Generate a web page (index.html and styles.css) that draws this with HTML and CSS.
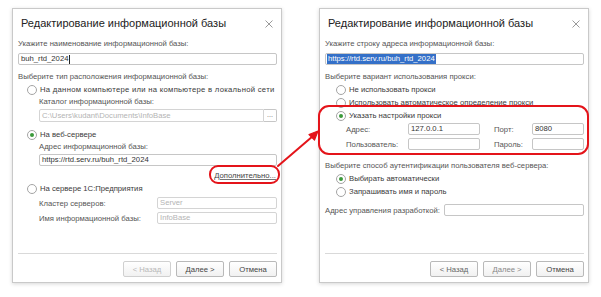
FILE: index.html
```html
<!DOCTYPE html>
<html lang="ru">
<head>
<meta charset="utf-8">
<link rel="stylesheet" href="styles.css">
</head>
<body>
<div class="page">
  <div class="dialog">
    <div class="title"><span>Редактирование информационной базы</span><svg class="close" width="8" height="8" viewBox="0 0 8 8"><path d="M0.5 0.5L7.5 7.5M7.5 0.5L0.5 7.5" stroke="#9a9a9a" stroke-width="1"/></svg></div>
    <div class="body">
      <div class="label">Укажите наименование информационной базы:</div>
      <div class="input mt3">buh_rtd_2024<span class="caret"></span></div>
      <div class="label mt5">Выберите тип расположения информационной базы:</div>
      <div class="radio r-left wide"><span class="circle"></span>На данном компьютере или на компьютере в локальной сети</div>
      <div class="label sub h12">Каталог информационной базы:</div>
      <div class="sub mt1 file-row"><div class="input disabled h13">C:\Users\kudant\Documents\InfoBase</div><div class="dots">...</div></div>
      <div class="radio r-left mt6"><span class="circle checked"></span>На веб-сервере</div>
      <div class="label sub h12">Адрес информационной базы:</div>
      <div class="input sub mt1">https://rtd.serv.ru/buh_rtd_2024</div>
      <div class="link-row mt4"><span class="link">Дополнительно...</span></div>
      <div class="radio r-left"><span class="circle"></span>На сервере 1С:Предприятия</div>
      <div class="field-row sub mt2"><span class="flabel w118">Кластер серверов:</span><div class="input disabled grow">Server</div></div>
      <div class="field-row sub mt3"><span class="flabel w118">Имя информационной базы:</span><div class="input disabled grow">InfoBase</div></div>
    </div>
    <div class="footer">
      <button class="btn off">&lt; Назад</button>
      <button class="btn">Далее &gt;</button>
      <button class="btn">Отмена</button>
    </div>
  </div>

  <div class="dialog">
    <div class="title"><span>Редактирование информационной базы</span><svg class="close" width="8" height="8" viewBox="0 0 8 8"><path d="M0.5 0.5L7.5 7.5M7.5 0.5L0.5 7.5" stroke="#9a9a9a" stroke-width="1"/></svg></div>
    <div class="body">
      <div class="label">Укажите строку адреса информационной базы:</div>
      <div class="input mt3"><span class="sel">https://rtd.serv.ru/buh_rtd_2024</span></div>
      <div class="label mt5">Выберите вариант использования прокси:</div>
      <div class="radio r-right"><span class="circle"></span>Не использовать прокси</div>
      <div class="radio r-right"><span class="circle"></span>Использовать автоматическое определение прокси</div>
      <div class="radio r-right"><span class="circle checked"></span>Указать настройки прокси</div>
      <div class="field-row sub mt1"><span class="flabel w62">Адрес:</span><div class="input w72">127.0.0.1</div><span class="flabel w38 ml14">Порт:</span><div class="input grow">8080</div></div>
      <div class="field-row sub mt3"><span class="flabel w62">Пользователь:</span><div class="input w72"></div><span class="flabel w38 ml14">Пароль:</span><div class="input grow"></div></div>
      <div class="label mt9">Выберите способ аутентификации пользователя веб-сервера:</div>
      <div class="radio r-right"><span class="circle checked"></span>Выбирать автоматически</div>
      <div class="radio r-right"><span class="circle"></span>Запрашивать имя и пароль</div>
      <div class="field-row mt6"><span class="flabel dev">Адрес управления разработкой:</span><div class="input grow"></div></div>
    </div>
    <div class="footer">
      <button class="btn mid">&lt; Назад</button>
      <button class="btn dim">Далее &gt;</button>
      <button class="btn">Отмена</button>
    </div>
  </div>

  <div class="mark mark-link"></div>
  <div class="mark mark-proxy"></div>
  <svg class="arrow" width="601" height="297" viewBox="0 0 601 297">
    <path d="M278 166L313 136" stroke="#e4141a" stroke-width="2" fill="none" stroke-linecap="round"/>
    <path d="M318 131L309 134.5L314.5 140Z" fill="#e4141a" stroke="#e4141a" stroke-width="1.2" stroke-linejoin="round"/>
  </svg>
</div>
</body>
</html>
```

FILE: styles.css
```css
* { box-sizing: border-box; }
html, body { margin: 0; padding: 0; background: #fff; }
body { font-family: "Liberation Sans", Arial, sans-serif; font-size: 7.7px; color: #444; }

.page {
  position: relative;
  width: 601px;
  height: 297px;
  display: flex;
  gap: 37px;
  padding: 8px 0 0 12px;
}

.dialog {
  width: 270px;
  height: 275px;
  border: 1px solid #c9c9c9;
  background: #fff;
  box-shadow: 0 1px 4px rgba(0,0,0,0.16);
  display: flex;
  flex-direction: column;
}

.title {
  height: 28px;
  display: flex;
  align-items: center;
  justify-content: space-between;
  padding: 0 8px 0 8px;
  font-size: 11px;
  color: #222;
}
.close { margin-top: 1px; }

.body {
  flex: 1;
  padding: 0 4px 0 5px;
}

.label { height: 13px; line-height: 13px; color: #555; white-space: nowrap; }
.h12 { height: 12px; line-height: 12px; }
.sub { margin-left: 21px; }
.mt1 { margin-top: 1px; }
.mt2 { margin-top: 2px; }
.mt3 { margin-top: 3px; }
.mt4 { margin-top: 4px; }
.mt5 { margin-top: 5px; }
.mt6 { margin-top: 6px; }
.mt9 { margin-top: 9px; }

.input {
  height: 12px;
  border: 1px solid #c6c6c6;
  border-radius: 2px;
  background: #fff;
  padding: 0 2px;
  line-height: 10px;
  color: #333;
  white-space: nowrap;
  overflow: hidden;
  display: flex;
  align-items: center;
}
.h13 { height: 13px; }
.input.disabled { color: #b4b4b4; border-color: #d4d4d4; }
.caret { display: inline-block; width: 1px; height: 9px; background: #222; margin-left: 1px; }
.sel { background: #3470c8; color: #fff; line-height: 10px; padding: 0 1px; margin-left: -1px; }

.file-row { display: flex; }
.file-row .input { flex: 1; border-radius: 2px 0 0 2px; }
.dots {
  width: 13px;
  height: 13px;
  border: 1px solid #c6c6c6;
  border-left: none;
  border-radius: 0 2px 2px 0;
  text-align: center;
  line-height: 10px;
  color: #666;
  font-size: 7px;
}

.radio {
  height: 13px;
  display: flex;
  align-items: center;
  color: #3a3a3a;
  white-space: nowrap;
}
.wide { letter-spacing: 0.28px; }
.r-left { padding-left: 9px; }
.r-right { padding-left: 11px; }
.circle {
  width: 10px;
  height: 10px;
  border: 1px solid #a4a4a4;
  border-radius: 50%;
  background: #fff;
  margin-right: 3px;
  flex: none;
  display: flex;
  align-items: center;
  justify-content: center;
}
.circle.checked::after {
  content: "";
  width: 4px;
  height: 4px;
  border-radius: 50%;
  background: #3b9a3b;
}

.link-row { height: 12px; display: flex; justify-content: flex-end; padding-right: 1px; line-height: 12px; }
.link { color: #444; text-decoration: underline; text-decoration-color: #777; text-underline-offset: 1px; }

.field-row { display: flex; align-items: center; white-space: nowrap; }
.flabel { color: #555; flex: none; }
.w118 { width: 118px; }
.w62 { width: 62px; }
.w38 { width: 38px; }
.w72 { width: 72px; flex: none; }
.ml14 { margin-left: 14px; }
.grow { flex: 1; }
.dev { width: 119px; }

.footer {
  margin: 0 4px 0 5px;
  border-top: 1px solid #d9d9d9;
  padding: 7px 0 5px;
  display: flex;
  justify-content: flex-end;
  gap: 5px;
}
.btn {
  width: 48px;
  height: 16px;
  border: 1px solid #b9b9b9;
  border-radius: 2px;
  background: linear-gradient(#ffffff, #f1f1f1);
  font-family: "Liberation Sans", Arial, sans-serif;
  font-size: 7.7px;
  color: #444;
  padding: 0;
}
.btn.off { color: #b8b8b8; border-color: #d0d0d0; }
.btn.mid { color: #666; }
.btn.dim { color: #888; }

.mark {
  position: absolute;
  border: 2px solid #e4141a;
  border-radius: 9px;
}
.mark-link { left: 209px; top: 165px; width: 71px; height: 19px; }
.mark-proxy { left: 318px; top: 105px; width: 271px; height: 50px; border-radius: 11px; }
.arrow { position: absolute; left: 0; top: 0; pointer-events: none; }
```
